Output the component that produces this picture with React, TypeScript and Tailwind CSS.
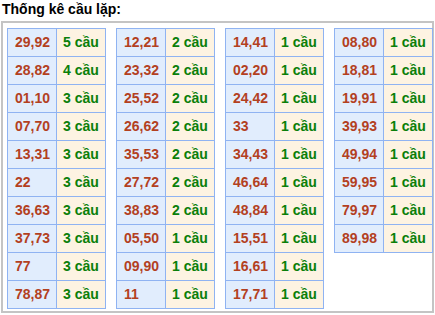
import React from "react";

const tables: [string, number][][] = [
  [["29,92", 5], ["28,82", 4], ["01,10", 3], ["07,70", 3], ["13,31", 3], ["22", 3], ["36,63", 3], ["37,73", 3], ["77", 3], ["78,87", 3]],
  [["12,21", 2], ["23,32", 2], ["25,52", 2], ["26,62", 2], ["35,53", 2], ["27,72", 2], ["38,83", 2], ["05,50", 1], ["09,90", 1], ["11", 1]],
  [["14,41", 1], ["02,20", 1], ["24,42", 1], ["33", 1], ["34,43", 1], ["46,64", 1], ["48,84", 1], ["15,51", 1], ["16,61", 1], ["17,71", 1]],
  [["08,80", 1], ["18,81", 1], ["19,91", 1], ["39,93", 1], ["49,94", 1], ["59,95", 1], ["79,97", 1], ["89,98", 1]],
];

export default function App() {
  return (
    <div className="w-[435px] h-[315px] bg-white font-['Liberation_Sans',Arial,sans-serif]">
      <div className="h-[21px] pl-[2px] pt-[1px] text-[14px] font-bold leading-[17px] text-black">Thống kê cầu lặp:</div>
      <div className="ml-[1px] w-[433px] h-[292px] border-2 border-[#c4c4c4] pl-[4px] pt-[5px] flex items-start gap-[10px]">
        {tables.map((rows, i) => (
          <div key={i} className="grid grid-cols-[49px_49px] border-l border-t border-[#8fb3f2] w-[99px]">
            {rows.map(([n, c], j) => (
              <React.Fragment key={j}>
                <div className="h-[28px] border-r border-b border-[#8fb3f2] bg-[#e1edfd] pl-[7px] flex items-center text-[14px] font-bold text-[#b3401f]">{n}</div>
                <div className="h-[28px] border-r border-b border-[#8fb3f2] bg-[#fdf3e2] pl-[6px] flex items-center text-[14px] font-bold text-[#0a7f0a] whitespace-nowrap">{c} cầu</div>
              </React.Fragment>
            ))}
          </div>
        ))}
      </div>
    </div>
  );
}
